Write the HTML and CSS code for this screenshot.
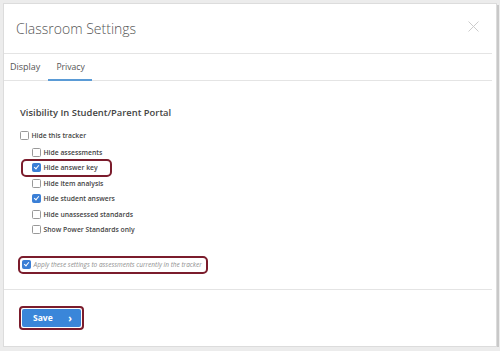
FILE: index.html
```html
<!DOCTYPE html>
<html lang="en">
<head>
  <meta charset="UTF-8" />
  <meta name="viewport" content="width=device-width, initial-scale=1.0" />
  <title>Classroom Settings</title>
  <link rel="stylesheet" href="styles.css">
</head>
<body>
  <div class="dialog">
    <div class="header">
      <h1 class="title">Classroom Settings</h1>
      <svg class="close" width="11" height="11" viewBox="0 0 11 11">
        <path d="M0.5 0.5 L10.5 10.5 M10.5 0.5 L0.5 10.5" stroke="#cccccc" stroke-width="1" fill="none" />
      </svg>
    </div>
    <div class="tabs">
      <span class="tab">Display</span>
      <span class="tab active">Privacy</span>
    </div>
    <div class="content">
      <h2 class="section-title">Visibility In Student/Parent Portal</h2>
      <div class="options">
        <label class="option"><span class="box"></span>Hide this tracker</label>
        <div class="sub-options">
          <label class="option"><span class="box"></span>Hide assessments</label>
          <label class="option highlight"><span class="box checked"></span>Hide answer key</label>
          <label class="option"><span class="box"></span>Hide item analysis</label>
          <label class="option"><span class="box checked"></span>Hide student answers</label>
          <label class="option"><span class="box"></span>Hide unassessed standards</label>
          <label class="option"><span class="box"></span>Show Power Standards only</label>
        </div>
      </div>
      <label class="apply highlight"><span class="box checked"></span>Apply these settings to assessments currently in the tracker</label>
    </div>
    <div class="footer">
      <div class="save-wrap">
        <button class="save">Save <span class="arrow">&rsaquo;</span></button>
      </div>
    </div>
  </div>
</body>
</html>
```
FILE: styles.css
```css
body {
  margin: 0;
  background-color: #ececec;
  font-family: "Open Sans", Arial, sans-serif;
  color: #444;
}

.dialog {
  margin: 3px 0 0 3px;
  width: 494px;
  height: 344px;
  background-color: white;
  border: 1px solid #dcdcdc;
  box-sizing: border-box;
  box-shadow: 2px 2px 0 #c8c8c8;
  display: flex;
  flex-direction: column;
}

.header {
  height: 49px;
  display: flex;
  align-items: center;
  justify-content: space-between;
  padding: 0 13px 0 12px;
  margin-right: 4px;
  border-bottom: 1px solid #e4e4e4;
}

.title {
  margin: 0;
  font-size: 14px;
  font-weight: 300;
  color: #555;
}

.close {
  margin-bottom: 5px;
}

.tabs {
  height: 26px;
  display: flex;
  align-items: stretch;
  margin-right: 4px;
  border-bottom: 1px solid #e4e4e4;
}

.tab {
  display: flex;
  align-items: center;
  padding: 0 7px;
  font-size: 9px;
  color: #555;
  border-bottom: 2px solid transparent;
  margin-bottom: -1px;
}

.tab:first-child {
  padding-left: 6px;
}

.tab.active {
  border-bottom-color: #5a9bd6;
  margin-left: 1px;
  padding: 0 7px 0 8px;
  font-size: 8.6px;
}

.content {
  flex: 1;
  padding: 25px 0 0 16px;
  margin-right: 4px;
  border-bottom: 1px solid #e4e4e4;
}

.section-title {
  margin: 0 0 8.5px 0;
  font-size: 9.4px;
  font-weight: 600;
  color: #444;
}

.option {
  display: flex;
  align-items: center;
  height: 15.5px;
  font-size: 6.8px;
  font-weight: 600;
  color: #444;
}

.sub-options {
  padding-left: 12px;
  margin-top: 1.5px;
}

.box {
  width: 7px;
  height: 7px;
  border: 1px solid #999;
  border-radius: 1.5px;
  margin-right: 2.5px;
  background-color: white;
  flex-shrink: 0;
}

.box.checked {
  background-color: #3a7fd6;
  border-color: #3a7fd6;
  position: relative;
}

.box.checked::after {
  content: "";
  position: absolute;
  left: 2px;
  top: 0px;
  width: 2px;
  height: 4px;
  border: solid white;
  border-width: 0 1.3px 1.3px 0;
  transform: rotate(40deg);
}

.highlight {
  border: 2px solid #7b1c2c;
  border-radius: 5px;
  width: fit-content;
  box-sizing: border-box;
}

.sub-options .highlight {
  height: 18px;
  margin: -1.25px 0 -1.25px -11px;
  padding: 0 12px 0 9px;
}

.apply {
  display: flex;
  align-items: center;
  margin: 18px 0 0 -2px;
  height: 18px;
  padding: 0 4px 0 2px;
  font-size: 6.5px;
  font-style: italic;
  color: #8f8f8f;
}

.footer {
  height: 56px;
  padding: 14px 0 0 15px;
  box-sizing: border-box;
}

.save-wrap {
  display: inline-block;
  border: 2px solid #7b1c2c;
  border-radius: 4px;
  padding: 1px;
}

.save {
  display: flex;
  align-items: center;
  justify-content: space-between;
  width: 59px;
  height: 18px;
  padding: 0 9px 0 11px;
  background-color: #3a86d9;
  border: none;
  border-radius: 2px;
  color: white;
  font-family: "Open Sans", Arial, sans-serif;
  font-size: 8.5px;
  font-weight: 700;
}

.arrow {
  font-size: 10px;
  font-weight: 700;
}
```
